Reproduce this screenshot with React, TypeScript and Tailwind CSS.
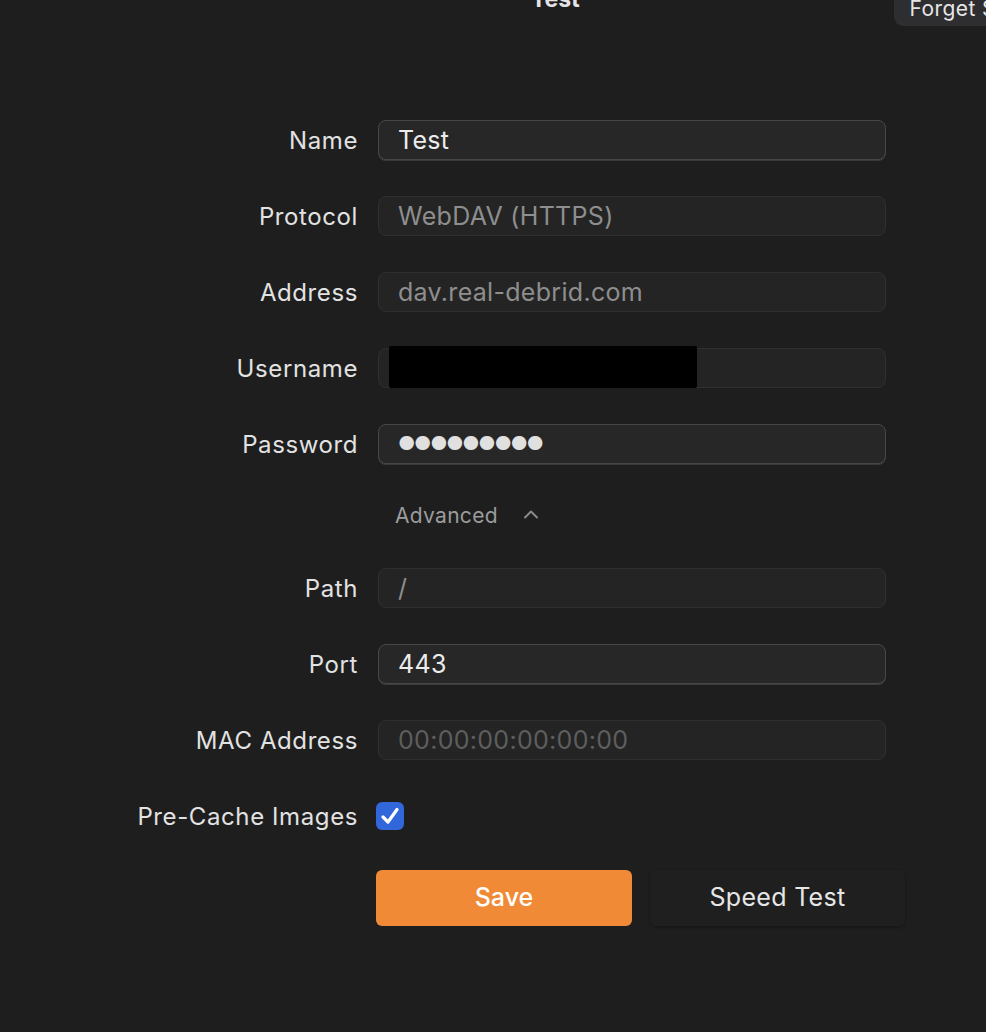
import React from 'react';

type Field = {
  label: string;
  value: string;
  tone: 'active' | 'muted' | 'placeholder' | 'redacted';
};

const topFields: Field[] = [
  { label: 'Name', value: 'Test', tone: 'active' },
  { label: 'Protocol', value: 'WebDAV (HTTPS)', tone: 'muted' },
  { label: 'Address', value: 'dav.real-debrid.com', tone: 'muted' },
  { label: 'Username', value: '', tone: 'redacted' },
  { label: 'Password', value: '●●●●●●●●●', tone: 'active' },
];

const advancedFields: Field[] = [
  { label: 'Path', value: '/', tone: 'muted' },
  { label: 'Port', value: '443', tone: 'active' },
  { label: 'MAC Address', value: '00:00:00:00:00:00', tone: 'placeholder' },
];

function Row({ label, children }: { label: string; children: React.ReactNode }) {
  return (
    <div className="flex h-10 items-center">
      <div className="w-[358px] shrink-0 whitespace-nowrap pt-px text-right text-[24px] tracking-[0.6px] text-[#e2e2e2]">
        {label}
      </div>
      <div className="ml-[20px] flex h-full w-[508px] items-center">{children}</div>
    </div>
  );
}

function Input({ field }: { field: Field }) {
  const active = field.tone === 'active';
  return (
    <div
      className={
        active
          ? 'relative flex h-10 w-full items-center rounded-[8px] border border-[#474747] bg-[#272727] px-[19px] pt-px text-[25px] tracking-[0.3px] text-[#ececec] shadow-[0_1px_0_#3a3a3a]'
          : 'relative flex h-10 w-full items-center rounded-[8px] border border-[#2f2f2f] bg-[#242424] px-[19px] pt-px text-[25px] tracking-[0.3px] text-[#8e8e8e]'
      }
    >
      {field.tone === 'placeholder' ? (
        <span className="text-[#5e5e5e]">{field.value}</span>
      ) : field.tone === 'redacted' ? (
        <span className="absolute left-[10px] top-[-3px] h-[42px] w-[308px] rounded-[2px] bg-black" />
      ) : field.label === 'Password' ? (
        <span className="text-[19px] tracking-[-1.3px] text-[#e0e0e0]">{field.value}</span>
      ) : (
        <span>{field.value}</span>
      )}
    </div>
  );
}

export default function App() {
  return (
    <div
      className="h-[1032px] w-[986px] overflow-hidden bg-[#1e1e1e]"
      style={{ fontFamily: 'Inter, "Noto Sans", sans-serif' }}
    >
      <header className="flex h-[26px] items-start">
        <h1 className="ml-[531px] -mt-[16px] text-[23px] font-bold leading-[30px] text-[#e4e4e4]">Test</h1>
        <div className="ml-[314px] h-[26px] shrink-0 whitespace-nowrap rounded-bl-[9px] bg-[#2e2e30] pl-[16px] pr-4 text-[21px] leading-[17px] tracking-[0.4px] text-[#e6e6e6]">
          Forget Server
        </div>
      </header>

      <div className="mt-[94px] flex flex-col">
        <div className="flex flex-col gap-[36px]">
          {topFields.map((f) => (
            <Row key={f.label} label={f.label}>
              <Input field={f} />
            </Row>
          ))}
        </div>

        <div className="flex h-[104px] items-center pl-[395px]">
          <span className="text-[21px] tracking-[0.3px] text-[#9c9c9c]">Advanced</span>
          <svg className="ml-[25px] mt-[-4px]" width="16" height="10" viewBox="0 0 16 10" fill="none">
            <path d="M2 8.5L8 2.5L14 8.5" stroke="#8a8a8a" strokeWidth="2" strokeLinecap="round" strokeLinejoin="round" />
          </svg>
        </div>

        <div className="flex flex-col gap-[36px]">
          {advancedFields.map((f) => (
            <Row key={f.label} label={f.label}>
              <Input field={f} />
            </Row>
          ))}
          <Row label="Pre-Cache Images">
            <div className="-ml-[2px] flex h-[28px] w-[28px] items-center justify-center rounded-[6px] bg-[#3266db]">
              <svg width="20" height="18" viewBox="0 0 20 18" fill="none">
                <path d="M3 10L8 15L17 2.5" stroke="white" strokeWidth="3.2" strokeLinecap="round" strokeLinejoin="round" />
              </svg>
            </div>
          </Row>
        </div>

        <div className="ml-[376px] mt-[34px] flex gap-[18px]">
          <button className="h-[56px] w-[256px] rounded-[6px] bg-[#f08a36] text-[25px] font-medium text-white">
            Save
          </button>
          <button className="h-[56px] w-[255px] rounded-[6px] bg-[#1f1f1f] text-[25px] tracking-[0.3px] text-[#e6e6e6] shadow-[0_1px_3px_rgba(0,0,0,0.3)]">
            Speed Test
          </button>
        </div>
      </div>
    </div>
  );
}
